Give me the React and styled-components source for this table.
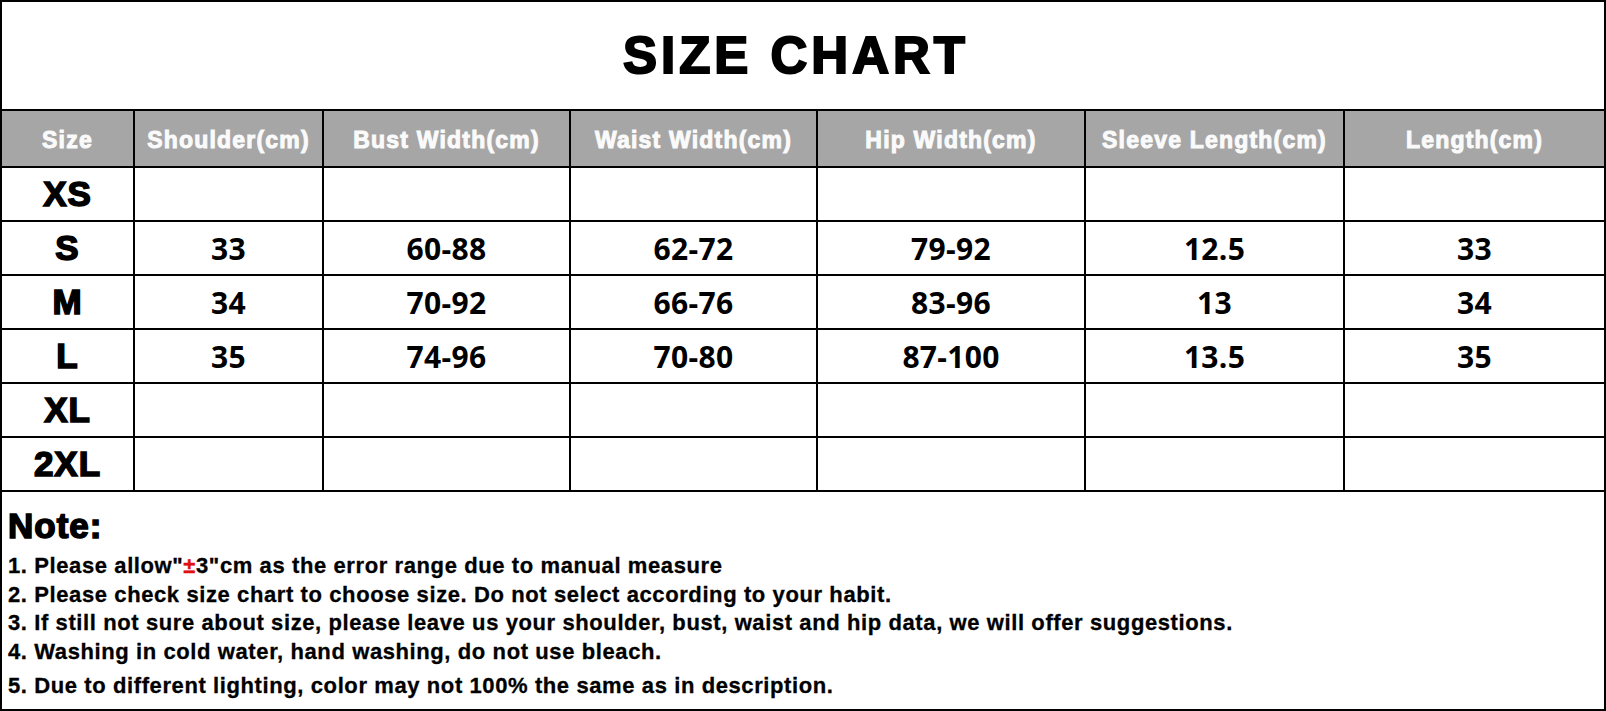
import React from "react";
import styled, { createGlobalStyle } from "styled-components";

const GlobalStyle = createGlobalStyle`
  * {
    box-sizing: border-box;
  }
  body {
    margin: 0;
    background: #fff;
    font-family: "Liberation Sans", Arial, sans-serif;
  }
`;

const columns = [
  "Size",
  "Shoulder(cm)",
  "Bust Width(cm)",
  "Waist Width(cm)",
  "Hip Width(cm)",
  "Sleeve Length(cm)",
  "Length(cm)",
];

const rows = [
  ["XS", "", "", "", "", "", ""],
  ["S", "33", "60-88", "62-72", "79-92", "12.5", "33"],
  ["M", "34", "70-92", "66-76", "83-96", "13", "34"],
  ["L", "35", "74-96", "70-80", "87-100", "13.5", "35"],
  ["XL", "", "", "", "", "", ""],
  ["2XL", "", "", "", "", "", ""],
];

const notes = [
  "2. Please check size chart to choose size. Do not select according to your habit.",
  "3. If still not sure about size, please leave us your shoulder, bust, waist and hip data, we will offer suggestions.",
  "4. Washing in cold water, hand washing, do not use bleach.",
];

const Chart = styled.div`
  width: 1606px;
  height: 711px;
  border: 2px solid #000;
  display: flex;
  flex-direction: column;
  background: #fff;
`;

const Title = styled.h1`
  margin: 0;
  height: 109px;
  border-bottom: 2px solid #000;
  display: flex;
  align-items: center;
  justify-content: center;
  padding-right: 14px;
  font-size: 51px;
  font-weight: 700;
  letter-spacing: 4px;
  -webkit-text-stroke: 2px #000;
  color: #000;
`;

const Grid = styled.div`
  display: grid;
  grid-template-columns: 133px 189px 247px 247px 268px 259px 1fr;
`;

const Cell = styled.div`
  display: flex;
  align-items: center;
  justify-content: center;
  height: ${(p) => (p.$head ? "57px" : "54px")};
  padding-top: ${(p) => (p.$head ? "4px" : "0")};
  border-bottom: 2px solid #000;
  border-right: ${(p) => (p.$last ? "none" : "2px solid #000")};
  background: ${(p) => (p.$head ? "#a6a6a6" : "#fff")};
  color: ${(p) => (p.$head ? "#fafafa" : "#000")};
  white-space: nowrap;
`;

const HeadText = styled.span`
  font-size: 23px;
  font-weight: 700;
  letter-spacing: 1.2px;
  -webkit-text-stroke: 1px #fafafa;
`;

const SizeText = styled.span`
  font-size: 35px;
  font-weight: 700;
  letter-spacing: 1px;
  -webkit-text-stroke: 1.6px #000;
`;

const ValueText = styled.span`
  font-family: "Open Sans", "Noto Sans", sans-serif;
  font-size: 30px;
  font-weight: 700;
  letter-spacing: 0.3px;
`;

const Notes = styled.div`
  flex: 1;
  padding: 14px 6px 0;
`;

const NoteTitle = styled.div`
  font-size: 35px;
  line-height: 40px;
  font-weight: 700;
  letter-spacing: 1px;
  -webkit-text-stroke: 1.6px #000;
  margin-bottom: 6px;
`;

const NoteLine = styled.div`
  font-size: 22px;
  line-height: 28.7px;
  font-weight: 700;
  letter-spacing: 0.6px;
  -webkit-text-stroke: 0.3px #000;
  color: #000;
  margin-top: ${(p) => (p.$gap ? "5px" : "0")};
  white-space: nowrap;
`;

const Red = styled.span`
  color: #e01010;
  -webkit-text-stroke: 0.3px #e01010;
`;

export default function App() {
  return (
    <>
      <GlobalStyle />
      <Chart>
        <Title>SIZE CHART</Title>
        <Grid>
          {columns.map((c, i) => (
            <Cell key={c} $head $last={i === columns.length - 1}>
              <HeadText>{c}</HeadText>
            </Cell>
          ))}
          {rows.map((r) =>
            r.map((v, i) => (
              <Cell key={r[0] + i} $last={i === r.length - 1}>
                {i === 0 ? <SizeText>{v}</SizeText> : <ValueText>{v}</ValueText>}
              </Cell>
            ))
          )}
        </Grid>
        <Notes>
          <NoteTitle>Note:</NoteTitle>
          <NoteLine>
            1. Please allow"<Red>±</Red>3"cm as the error range due to manual measure
          </NoteLine>
          {notes.map((n) => (
            <NoteLine key={n}>{n}</NoteLine>
          ))}
          <NoteLine $gap>
            5. Due to different lighting, color may not 100% the same as in description.
          </NoteLine>
        </Notes>
      </Chart>
    </>
  );
}
